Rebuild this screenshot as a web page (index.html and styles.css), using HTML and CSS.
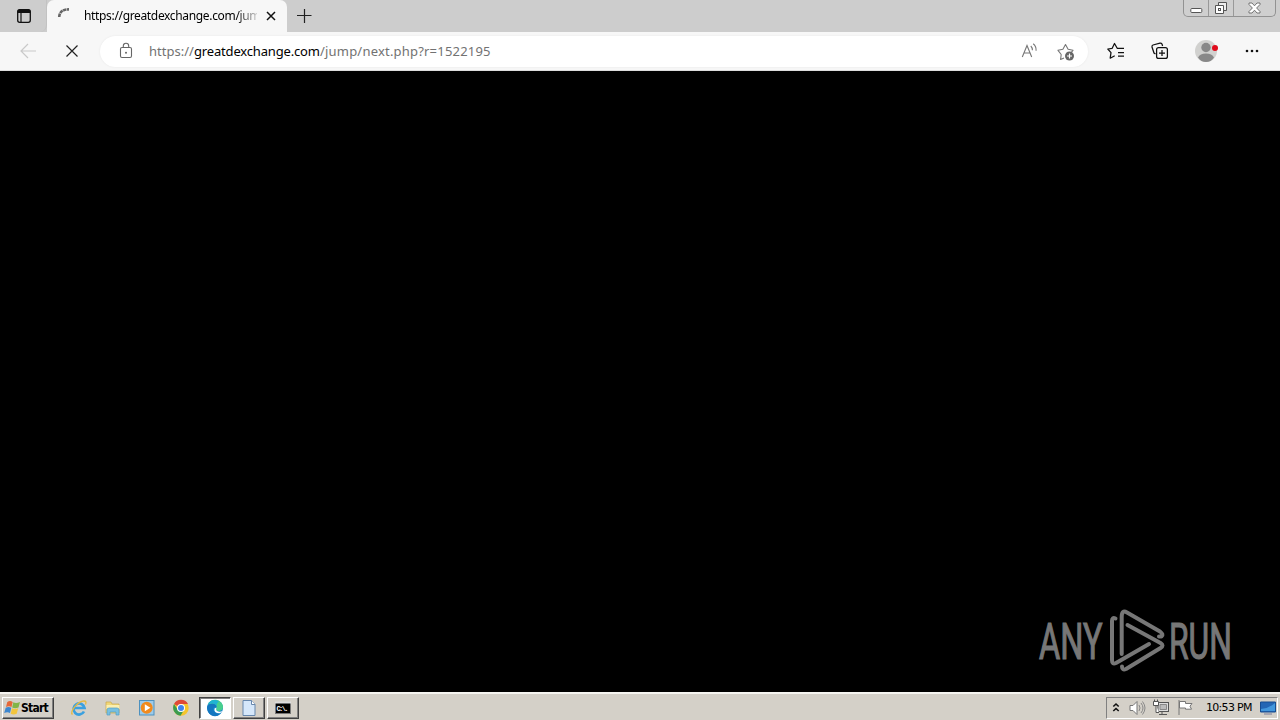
FILE: index.html
```html
<!DOCTYPE html>
<html lang="en">
<head>
<meta charset="utf-8">
<title>Browser</title>
<link rel="stylesheet" href="styles.css">
</head>
<body>
<div class="screen">
  <header class="tabstrip">
    <div class="workspace"><svg width="16" height="16" viewBox="0 0 16 16"><rect x="1.700" y="1.700" width="12.600" height="12.600" rx="2" fill="none" stroke="#111" stroke-width="1.300"/><path d="M1.500 5V3.500a2 2 0 0 1 2-2h9a2 2 0 0 1 2 2V5z" fill="#111"/><path d="M5 5v9" stroke="#111" stroke-width="1.200"/></svg></div>
    <div class="tab">
      <svg class="spinner" width="16" height="16" viewBox="0 0 16 16"><path d="M2.200 10C2.500 4.800 6 2.300 12 2.400" fill="none" stroke="#666" stroke-width="2.600" stroke-dasharray="3.500 .5"/></svg>
      <span class="tab-title">https://greatdexchange.com/jum</span>
      <svg class="tab-close" width="10" height="10" viewBox="0 0 10 10"><path d="M1 1l8 8M9 1L1 9" stroke="#111" stroke-width="1.500"/></svg>
    </div>
    <svg class="newtab" width="16" height="16" viewBox="0 0 16 16"><path d="M8.500 1v14M1 7.500h14.500" stroke="#222" stroke-width="1.200"/></svg>
    <div class="winbuttons">
      <span class="wb wb-min"><svg width="13" height="14" viewBox="0 0 13 14"><rect x=".8" y="7.500" width="11" height="4" rx="1" fill="#fff" stroke="#555"/></svg></span>
      <span class="wb wb-max"><svg width="14" height="14" viewBox="0 0 14 14"><path d="M4.500 1.500h8v8h-8z" fill="#eee" stroke="#555"/><path d="M1.500 4.500h8v8h-8z" fill="#fff" stroke="#555"/><rect x="4.500" y="7.500" width="2" height="2" fill="#fff" stroke="#555"/></svg></span>
      <span class="wb wb-close"><svg width="13" height="12" viewBox="0 0 13 12"><path d="M1 1h3l2.500 2.800L9 1h3v1.500L8.600 6l3.400 3.500V11H9L6.500 8.200 4 11H1V9.500L4.400 6 1 2.500z" fill="#fff" stroke="#666" stroke-width=".9"/></svg></span>
    </div>
  </header>

  <nav class="toolbar">
    <svg class="back" width="16" height="16" viewBox="0 0 16 16"><path d="M16 8H1M8 1L1 8l7 7" fill="none" stroke="#c9c9c9" stroke-width="1.200"/></svg>
    <svg class="stop" width="12" height="12" viewBox="0 0 12 12"><path d="M.5.5l11 11M11.500.5l-11 11" stroke="#222" stroke-width="1.200"/></svg>
    <div class="address">
      <svg class="lock" width="14" height="16" viewBox="0 0 14 16"><rect x="1.500" y="4.500" width="11" height="10" rx="1.500" fill="none" stroke="#666" stroke-width="1.100"/><path d="M4.300 4.500V3a2.700 2.700 0 0 1 5.400 0v1.500" fill="none" stroke="#666" stroke-width="1.100"/><circle cx="7" cy="9.800" r="1" fill="#666"/></svg>
      <span class="url"><span class="u1">https://</span><span class="host">greatdexchange.com</span><span class="u3">/jump/next.php?r=1522195</span></span>
      <svg class="read" width="17" height="16" viewBox="0 0 17 16"><path d="M1.300 14L6 2.500 10.700 14M3 10h6M9.800 3q1.700 1.700 1.600 4.300M12.200.8q3.200 2.500 2.900 7" fill="none" stroke="#777" stroke-width="1.100"/></svg>
      <svg class="fav" width="18" height="18" viewBox="0 0 18 18"><path d="M7 15L3.600 16.500l.6-5L1 7.300l4.900-1L8.500 1.500l2.600 4.800 4.900 1-1.700 2" fill="none" stroke="#777" stroke-width="1.100" stroke-linejoin="round"/><circle cx="12.500" cy="13" r="4.500" fill="#666"/><path d="M12.500 10.500v5M10 13h5" stroke="#fff" stroke-width="1.200"/></svg>
    </div>
    <svg class="t-fav" width="18" height="18" viewBox="0 0 18 18"><path d="M17 6.300H10.200L7.500 1.500 5.200 6.300.8 7 4 10.700l-.8 5.500 4.500-2.400M11 10.500h6M11 14h6" fill="none" stroke="#111" stroke-width="1.250" stroke-linejoin="round"/></svg>
    <svg class="t-col" width="18" height="18" viewBox="0 0 18 18"><path d="M4.500 12L3 11 1 5q-.3-1.500 1-2l7-1.800q1.300-.2 2 .8l.6 2" fill="none" stroke="#111" stroke-width="1.250"/><rect x="5.600" y="5.600" width="10.800" height="10.800" rx="2" fill="none" stroke="#111" stroke-width="1.250"/><path d="M11 8v6M8 11h6" stroke="#111" stroke-width="1.250"/></svg>
    <svg class="t-user" width="24" height="24" viewBox="0 0 24 24"><circle cx="12" cy="12" r="11" fill="#d1d1cf"/><circle cx="12" cy="8.500" r="4.700" fill="#888"/><path d="M4 18.500q2-4 8-4t8 4q-3 4.500-8 4.500t-8-4.500z" fill="#888"/><circle cx="21" cy="9" r="3" fill="#e00b1c"/></svg>
    <svg class="t-more" width="14" height="4" viewBox="0 0 14 4"><circle cx="2" cy="2" r="1.300" fill="#111"/><circle cx="7" cy="2" r="1.300" fill="#111"/><circle cx="12" cy="2" r="1.300" fill="#111"/></svg>
  </nav>

  <main class="page">
    <svg class="watermark" width="210" height="80" viewBox="0 0 210 80">
      <g class="wm-text">
        <g transform="translate(9 59) scale(.61 1)"><text textLength="104" lengthAdjust="spacingAndGlyphs">ANY</text></g>
        <g transform="translate(139 59) scale(.61 1)"><text textLength="103" lengthAdjust="spacingAndGlyphs">RUN</text></g>
      </g>
      <g class="wm-line">
        <path d="M85.500 18.500Q82 17 82 21V60Q82 65 86 63L119 44"/>
        <path d="M91.700 54V17Q91.700 9.500 97 12.500L130 31.500Q134 34.500 131.500 36.500L129 36.500"/>
        <path d="M97.500 25L130.500 43Q134.500 45.500 130.500 48L96 69Q92 70.500 92 66.500"/>
      </g>
    </svg>
  </main>

  <footer class="taskbar">
    <div class="start"><svg width="17" height="16" viewBox="0 0 17 16"><path d="M3.300 2Q6 0 8.700 2L7.500 7Q5 5.500 2 7z" fill="#e56738"/><path d="M9.300 2.300Q12 4 16 2L14.500 7.500Q11 9 8.200 7.500z" fill="#82b548"/><path d="M1.700 7.700Q4.500 6.200 7.300 7.700L6 13Q3.500 11.500.2 13z" fill="#3c86cf"/><path d="M8 8.200Q11 9.700 14.200 8.200L12.700 13.700Q9.500 15.300 6.700 13.700z" fill="#f3c53d"/></svg><span>Start</span></div>
    <div class="quick">
      <svg width="18" height="18" viewBox="0 0 18 18"><path d="M14 12.500A5.500 5.500 0 1 1 14.500 9H5" fill="none" stroke="#3ba0df" stroke-width="2.700"/><path d="M2.500 15.500C-1 13 8 2 14 2q3 0 1.500 3.500" fill="none" stroke="#e6b840" stroke-width="1.300"/></svg>
      <svg width="18" height="18" viewBox="0 0 18 18"><path d="M2 3h5l1 2h7v9H2z" fill="#f0d778" stroke="#caa84a" stroke-width=".7"/><path d="M2.500 6h13v4h-13z" fill="#fbefb0"/><path d="M3 16V11q0-2 2-2h8q2 0 2 2v5h-3v-3H6v3z" fill="#78c0e0" stroke="#559fc5" stroke-width=".7"/></svg>
      <svg width="18" height="18" viewBox="0 0 18 18"><rect x="1.500" y="1.500" width="14.500" height="14.500" fill="#9dcbea" stroke="#4d91bf"/><circle cx="8.700" cy="8.700" r="6" fill="#f18a1c"/><path d="M6.800 5.200v7l5.600-3.500z" fill="#fff"/></svg>
      <svg width="18" height="18" viewBox="0 0 18 18"><circle cx="9" cy="9" r="7.700" fill="#f5c52c"/><path d="M9 9L2 5A8 8 0 0 1 16 5H9z" fill="#df4937"/><path d="M2 5A8 8 0 0 0 8.500 16.700L12 11H6z" fill="#3b9b50"/><circle cx="9" cy="9" r="4" fill="#fff"/><circle cx="9" cy="9" r="3" fill="#4184ed"/></svg>
    </div>
    <div class="tasks">
      <div class="task active"><svg width="18" height="18" viewBox="0 0 18 18"><circle cx="9" cy="9" r="8" fill="#1685ca"/><path d="M2 5.500C4-1 15-1 17 7q.5 4.500-4 5-4 0-2.500-3 0-4-4-4.200-2.500 0-4.500.7z" fill="#48cf8e"/><path d="M2 5.500C4 .3 10-.2 13 2.500q-3 2-2 5Q9 4 5 4.700 3 5 2 5.500z" fill="#21b3d3"/><path d="M1 8Q3 4 8 5q3 1 2.500 4Q9 7 7 9q-1 5 7 6Q10 19 5 16 1 13 1 8z" fill="#1577c0"/><path d="M10.500 8.500q-1.500 4 3 4.200 2 0 3.500-1.200-1 2.300-3.500 2.800Q7.500 14 8.500 9.500z" fill="#fff"/></svg></div>
      <div class="task"><svg width="16" height="18" viewBox="0 0 16 18"><path d="M2 1.500h8.500l3.500 4v11H2z" fill="#d5e7fa" stroke="#6687ad"/><path d="M10.500 1.500v4H14" fill="#fff" stroke="#6687ad"/></svg></div>
      <div class="task"><svg width="16" height="14" viewBox="0 0 16 14"><rect x=".5" y="1.500" width="15" height="11" fill="#000" stroke="#777"/><path d="M0 1.500h16" stroke="#ddd" stroke-width="2"/><text class="cmd-text" x="1.500" y="10" textLength="12">C:\.</text></svg></div>
    </div>
    <div class="tray">
      <svg width="8" height="12" viewBox="0 0 8 12"><path d="M1.300 4.500L4 2l2.700 2.500M1.300 9L4 6.500 6.700 9" fill="none" stroke="#111" stroke-width="1.600"/></svg>
      <svg class="vol" width="18" height="16" viewBox="0 0 18 16"><path d="M1 5.500h3l4-4v13l-4-4H1z" fill="#fff" stroke="#777"/><path d="M10 5q2 3 0 6M12 3q4 5 0 10M13.500 1.500q5 6.500 0 13" fill="none" stroke="#888"/></svg>
      <svg class="net" width="18" height="17" viewBox="0 0 18 17"><rect x="5" y="3.500" width="10.500" height="9" fill="#ddd" stroke="#555"/><path d="M7 5.500h6.500v5H7z" fill="#bbb" stroke="#888"/><path d="M9 12.500v2.500M6 15.500h8" fill="none" stroke="#555"/><path d="M.5 2.500h5v4h-5zM3 6.500v7h3M1.500 .5v2M4.500 .5v2" fill="#fff" stroke="#555"/></svg>
      <svg class="flag" width="17" height="17" viewBox="0 0 17 17"><path d="M2 1v15M2.500 2.500h6v2H15l-2 2.700 1.500 3H8.500V9h-6z" fill="#fff" stroke="#777"/></svg>
      <span class="clock">10:53 PM</span>
      <svg class="desk" width="16" height="14" viewBox="0 0 16 14"><path d="M.5 1h15v10H.5z" fill="#2466b4" stroke="#164d91"/><path d="M1 8Q8 8 15 2v8H1z" fill="#4397dc"/><path d="M4 13h8" stroke="#99a" stroke-width="1.500"/></svg>
    </div>
  </footer>
</div>
</body>
</html>
```

FILE: styles.css
```css
* { box-sizing: border-box; }
body { margin: 0; background: #000; overflow: hidden; }
svg { display: block; flex: none; overflow: visible; }
.screen { width: 1280px; height: 720px; display: flex; flex-direction: column; font-family: "Noto Sans", sans-serif; }
.tabstrip { height: 32px; flex: none; display: flex; background: #cdcdcd; }
.workspace { width: 47px; height: 32px; padding: 8px 0 0 16px; border-right: 1px solid #c2c2c2; border-bottom-right-radius: 7px; }
.tab { width: 240px; height: 32px; display: flex; align-items: center; background: #f7f7f7; border-radius: 7px 7px 0 0; }
.spinner { margin: -3px 0 0 10px; }
.tab-title { width: 173px; margin-left: 11px; white-space: nowrap; font-size: 12px; line-height: 18px; letter-spacing: -.34px; color: transparent; background: linear-gradient(90deg, #000 0 152px, #ccc 173px); -webkit-background-clip: text; background-clip: text; }
.tab-close { margin-left: 9px; }
.newtab { margin: 8px 0 0 9px; }
.winbuttons { width: 93px; height: 17px; display: flex; margin-left: auto; margin-right: 4px; border: 1px solid #929292; border-top: 0; border-radius: 0 0 5px 5px; background: #cfcfcf; }
.wb { display: flex; align-items: center; justify-content: center; border-right: 1px solid #999; }
.wb-min { width: 25px; }
.wb-max { width: 25px; }
.wb-close { width: 41px; border: 0; }
.toolbar { height: 39px; flex: none; display: flex; align-items: center; background: #f7f7f7; border-bottom: 1px solid #ddd; }
.back { margin-left: 20px; }
.stop { margin-left: 30px; }
.address { width: 988px; height: 31px; display: flex; align-items: center; margin-left: 22px; border-radius: 16px; background: #fff; box-shadow: 0 0 2px #e5e5e5; }
.lock { margin-left: 19px; }
.url { width: 342px; display: flex; margin-left: 16px; white-space: nowrap; font-size: 13px; line-height: 20px; color: #727272; }
.u1 { width: 45px; }
.host { width: 126px; letter-spacing: -.17px; color: #000; }
.u3 { letter-spacing: .2px; }
.read { margin-left: auto; }
.fav { margin: 1px 13px 0 19px; }
.t-fav { margin-left: 19px; }
.t-col { margin-left: 26px; }
.t-user { margin-left: 25px; }
.t-more { margin-left: 27px; }
.page { flex: 1; display: flex; align-items: flex-end; justify-content: flex-end; padding: 0 40px 12px 0; background: #000; }
.wm-text { fill: #777; stroke: #777; stroke-width: 1.2; font-family: Roboto, sans-serif; font-size: 50px; }
.wm-line { fill: none; stroke: #777; stroke-width: 4; stroke-linecap: round; stroke-linejoin: round; }
.taskbar { height: 28px; flex: none; display: flex; align-items: center; padding: 1px 2px 0; background: #d4d0c8; border-top: 2px solid #f5f4f0; }
.start { width: 52px; height: 22px; display: flex; align-items: center; padding-left: 1px; border: 1px solid; border-color: #fff #404040 #404040 #fff; box-shadow: inset -1px -1px #808080; font: bold 12px "DejaVu Sans Condensed", "DejaVu Sans", sans-serif; letter-spacing: -.75px; color: #000; }
.quick { display: flex; gap: 16px; margin-left: 16px; }
.tasks { display: flex; gap: 2px; margin-left: 9px; }
.task { width: 32px; height: 22px; display: flex; align-items: center; justify-content: center; border: 1px solid; border-color: #fff #404040 #404040 #fff; box-shadow: inset -1px -1px #808080; }
.task.active { background: #fff; border-color: #404040 #fff #fff #404040; box-shadow: inset 1px 1px #808080; }
.cmd-text { fill: #fff; font: bold 7px "Liberation Mono", monospace; }
.tray { width: 172px; height: 22px; display: flex; align-items: center; margin-left: auto; padding-left: 5px; border: 1px solid; border-color: #808080 #fff #fff #808080; }
.vol { margin-left: 9px; }
.net { margin-left: 6px; }
.flag { margin-left: 6px; }
.clock { width: 46px; margin-left: 12px; font: 11px "DejaVu Sans", sans-serif; letter-spacing: -.7px; white-space: nowrap; }
.desk { margin-left: 8px; }
```
